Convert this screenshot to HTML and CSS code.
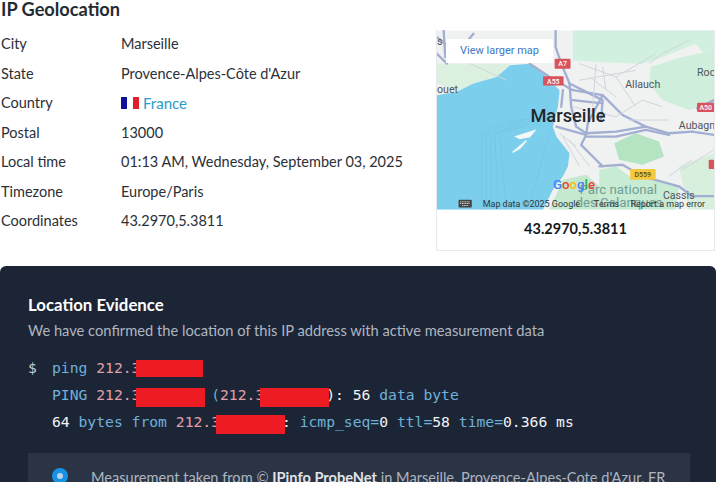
FILE: index.html
```html
<!DOCTYPE html>
<html lang="en">
<head>
<meta charset="utf-8">
<title>IP Geolocation</title>
<link rel="stylesheet" href="styles.css">
</head>
<body>
<section class="geo">
  <div class="geo-info">
    <h2 class="geo-title">IP Geolocation</h2>
    <dl class="facts">
      <div class="fact"><dt>City</dt><dd>Marseille</dd></div>
      <div class="fact"><dt>State</dt><dd>Provence-Alpes-Côte d'Azur</dd></div>
      <div class="fact"><dt>Country</dt><dd class="country">
        <svg class="flag" viewBox="0 0 3 2" preserveAspectRatio="none" aria-hidden="true"><rect width="1" height="2" fill="#10109a"/><rect x="1" width="1" height="2" fill="#fff"/><rect x="2" width="1" height="2" fill="#e2202c"/></svg>
        <a href="#">France</a></dd></div>
      <div class="fact"><dt>Postal</dt><dd>13000</dd></div>
      <div class="fact"><dt>Local time</dt><dd>01:13 AM, Wednesday, September 03, 2025</dd></div>
      <div class="fact"><dt>Timezone</dt><dd>Europe/Paris</dd></div>
      <div class="fact"><dt>Coordinates</dt><dd>43.2970,5.3811</dd></div>
    </dl>
  </div>
  <figure class="map-card">
    <div class="map">
      <svg class="map-art" viewBox="20 30 836 540" aria-label="Map of Marseille">
        <defs><filter id="soft"><feGaussianBlur stdDeviation="1.4"/></filter></defs>
        <g filter="url(#soft)">
          <rect x="20" y="30" width="836" height="540" fill="#f0f1f1"/>
          <path d="M430 30H856V130L800 70 700 110 640 130 500 125 430 120Z" fill="#d2f0df"/>
          <path d="M665 140 760 110 856 90V250L780 270 700 240 660 190Z" fill="#cfeedc"/>
          <path d="M20 130H240L200 170 130 190 80 215 20 190Z" fill="#dcf0df"/>
          <path d="M510 570V450L560 440 600 470 680 480 750 500 740 570Z" fill="#c8ebd3"/>
          <path d="M555 370 620 340 690 365 705 410 640 435 570 420Z" fill="#b4e4c2"/>
          <path d="M750 440 856 400V570H780Z" fill="#d8efdd"/>
          <path d="M360 570 400 480 470 465 510 500V570Z" fill="#c4e9cf"/>
          <path d="M20 225 80 215 130 190 200 170 240 135 300 130 345 165 390 210 385 260 370 320 380 350 420 400 415 440 400 470 370 510 340 570H20Z" fill="#7ccfec"/>
          <path d="M258 350 315 332 300 350 270 356ZM248 398 290 362 270 385Z" fill="#f6f8f8" stroke="#f6f8f8" stroke-width="4"/>
          <g fill="none" stroke="#62b4d8" stroke-width="2" stroke-dasharray="3 3">
            <path d="M155 570V345Q165 315 300 296"/>
            <path d="M170 570 168 345Q180 322 300 304"/>
            <path d="M185 570 182 345Q195 330 300 312"/>
            <path d="M205 570 195 345Q205 335 290 320"/>
            <path d="M228 570 210 345"/>
            <path d="M295 570 365 320"/>
          </g>
          <g fill="none" stroke="#a2aed2" stroke-width="7" stroke-linejoin="round" stroke-linecap="round">
            <path d="M378 30V80L395 130 420 190 425 260 440 320 470 340 560 335 650 320 720 340 790 335"/>
            <path d="M300 130 360 170 430 210 520 225 580 285 650 320"/>
            <path d="M380 320 470 345 475 310 520 225"/>
            <path d="M470 345 455 375 500 420 520 440M510 440 580 435 640 470 750 500 790 530 856 530"/>
            <path d="M790 335 856 345M805 265 856 240M470 350 560 350 650 330 720 345"/>
            <path d="M420 190 520 240 515 300M430 240 520 250M400 210 395 260"/>
            <path d="M20 50 80 100 130 40M20 100 50 130M40 30 45 110"/>
          </g>
          <g fill="none" stroke="#d0d5dd" stroke-width="3">
            <path d="M450 130 560 170 680 100M500 130 490 260M560 170 620 260M600 300 720 300M430 260 560 290M400 350 450 440M480 170 560 230M120 130 230 180M660 130 700 100 780 60M520 140 530 210M450 180 620 150M560 290 640 240 700 260"/>
            <path d="M760 450 856 390M720 470 790 420M390 340 440 380M420 360 480 440"/>
          </g>
        </g>
        <g class="shield-text">
          <rect x="375" y="115" width="48" height="30" rx="3" fill="#d9535c"/><text x="399" y="138" text-anchor="middle">A7</text>
          <rect x="340" y="168" width="62" height="28" rx="3" fill="#d9535c"/><text x="371" y="190" text-anchor="middle">A55</text>
          <rect x="805" y="248" width="60" height="28" rx="3" fill="#d9535c"/><text x="812" y="270">A50</text>
          <rect x="840" y="420" width="30" height="28" rx="3" fill="#d9535c"/>
          <rect x="603" y="448" width="77" height="32" rx="3" fill="#f5c93f"/><text class="shield-dark" x="641" y="472" text-anchor="middle">D559</text>
        </g>
        <text class="place" x="20" y="218">ouet</text>
        <text class="place" x="20" y="75">s</text>
        <text class="place" x="805" y="168">Roc</text>
        <text class="place" x="588" y="204">Allauch</text>
        <text class="place" x="750" y="326">Aubagn</text>
        <text class="place" x="702" y="539">Cassis</text>
        <text class="city" x="302" y="306">Marseille</text>
        <text class="park" x="450" y="524">Parc national</text>
        <text class="park" x="438" y="564">des Calanques</text>
        <text class="google" x="370" y="508"><tspan fill="#4285f4">G</tspan><tspan fill="#ea4335">o</tspan><tspan fill="#fbbc05">o</tspan><tspan fill="#4285f4">g</tspan><tspan fill="#34a853">l</tspan><tspan fill="#ea4335">e</tspan></text>
        <rect class="kbd" x="85" y="541" width="40" height="23" rx="3"/>
        <path d="M90 547H120M90 552H120M96 558H114" stroke="#fff" stroke-width="2.5" stroke-dasharray="3 2"/>
        <text class="attr" x="158" y="562">Map data ©2025 Google</text>
        <text class="attr" x="494" y="562">Terms</text>
        <text class="attr" x="604" y="562">Report a map error</text>
      </svg>
      <a class="map-link" href="#">View larger map</a>
    </div>
    <figcaption class="map-caption">43.2970,5.3811</figcaption>
  </figure>
</section>

<section class="evidence">
  <h3 class="evidence-title">Location Evidence</h3>
  <p class="evidence-sub">We have confirmed the location of this IP address with active measurement data</p>
  <div class="terminal">
    <div class="term-row"><span class="prompt">$</span><code><span class="kw">ping</span> <span class="ip">212.3<i class="redact r-a"></i></span></code></div>
    <div class="term-row"><span class="prompt"></span><code><span class="kw">PING</span> <span class="ip">212.3<i class="redact r-b"></i></span>        <span class="kw">(</span><span class="ip">212.3<i class="redact r-b"></i></span>       <span class="wh">): 56</span> <span class="kw">data byte</span></code></div>
    <div class="term-row"><span class="prompt"></span><code><span class="wh">64</span> <span class="kw">bytes from</span> <span class="ip">212.3<i class="redact r-b"></i></span>       <span class="wh">:</span> <span class="kw">icmp_seq=</span><span class="wh">0</span> <span class="kw">ttl=</span><span class="wh">58</span> <span class="kw">time=</span><span class="wh">0.366 ms</span></code></div>
  </div>
  <div class="measure">
    <svg class="pin" viewBox="0 0 16 20" aria-hidden="true"><path d="M8 0a8 8 0 0 1 8 8c0 5-5 9-8 12-3-3-8-7-8-12a8 8 0 0 1 8-8Z" fill="#1792e4"/><circle cx="8" cy="8" r="3" fill="#b9d3e8"/></svg>
    <p>Measurement taken from © <b>IPinfo ProbeNet</b> in Marseille, Provence-Alpes-Cote d'Azur, FR</p>
  </div>
</section>
</body>
</html>
```
FILE: styles.css
```css
* { box-sizing: border-box; }
html, body { margin: 0; height: 482px; overflow: hidden; background: #fff; }
body { font-family: "Lato", "Liberation Sans", sans-serif; color: #2b3038; width: 717px; }

.geo { display: flex; justify-content: space-between; height: 266px; padding-right: 2px; }
.geo-info { padding-left: 1px; }
.geo-title { margin: 0; font-size: 18.2px; line-height: 19px; font-weight: 700; color: #252b33; height: 29px; }
.facts { margin: 0; }
.fact { display: flex; height: 29.5px; align-items: center; font-size: 14.5px; }
.fact dt { width: 120px; }
.fact dd { margin: 0; }
.country { display: flex; align-items: center; gap: 4px; }
.flag { width: 18px; height: 12px; }
.country a { color: #2a9bc9; text-decoration: none; font-size: 15px; }

.map-card { margin: 30px 0 0; width: 279px; height: 221px; border: 1px solid #e8eaed; border-top: 0; }
.map { position: relative; height: 180px; overflow: hidden; }
.map-art { display: block; width: 100%; height: 180px; }
.map-link { position: absolute; left: 9px; top: 9px; width: 107px; height: 24px; background: #fff; color: #3c78c4; font: 11px/24px "Roboto", sans-serif; text-align: center; text-decoration: none; }
.map-caption { text-align: center; font-size: 14.5px; font-weight: 700; color: #15181d; line-height: 37px; }

.shield-text text { font: 500 21px "Roboto", sans-serif; fill: #fff; }
.shield-text .shield-dark { fill: #5d4a12; }
.place { font: 400 32px "Roboto", sans-serif; fill: #50555b; }
.city { font: 500 55px "Roboto", sans-serif; fill: #23272c; }
.park { font: 400 40px "Roboto", sans-serif; fill: #6f9f96; }
.google { font: 500 40px "Roboto", sans-serif; }
.kbd { fill: #444; }
.attr { font: 400 27px "Roboto", sans-serif; fill: #2f3640; }

.evidence { height: 216px; width: 716px; overflow: hidden; background: #1c2536; border-radius: 6px 6px 0 0; padding: 29px 26px 0 28px; color: #fff; }
.evidence-title { margin: 0; font-size: 16.8px; line-height: 20px; font-weight: 700; color: #fff; }
.evidence-sub { margin: 5px 0 0; font-size: 14.7px; line-height: 20px; color: #aeb5c0; }
.terminal { margin-top: 14px; font: 14.7px/27px "DejaVu Sans Mono", monospace; }
.term-row { display: flex; height: 27px; align-items: center; white-space: pre; }
.term-row code { font: inherit; }
.prompt { width: 24px; color: #c7cbd1; }
.kw { color: #6fb1d8; }
.ip { color: #e0a0a8; position: relative; }
.wh { color: #f2f4f6; }
.redact { position: absolute; background: #ed1c24; }
.r-a { left: 40px; top: 1px; width: 67px; height: 17px; }
.r-b { left: 40px; top: 2px; width: 69px; height: 19px; }

.measure { margin-top: 18px; height: 30px; background: #2a3444; padding: 16px 0 0 24px; display: flex; gap: 23px; overflow: hidden; }
.pin { flex: none; width: 16px; height: 20px; margin-top: -1px; }
.measure p { margin: 0; font-size: 14.6px; line-height: 18px; color: #aeb5c0; }
.measure b { color: #e1e4e8; font-weight: 700; }
```
